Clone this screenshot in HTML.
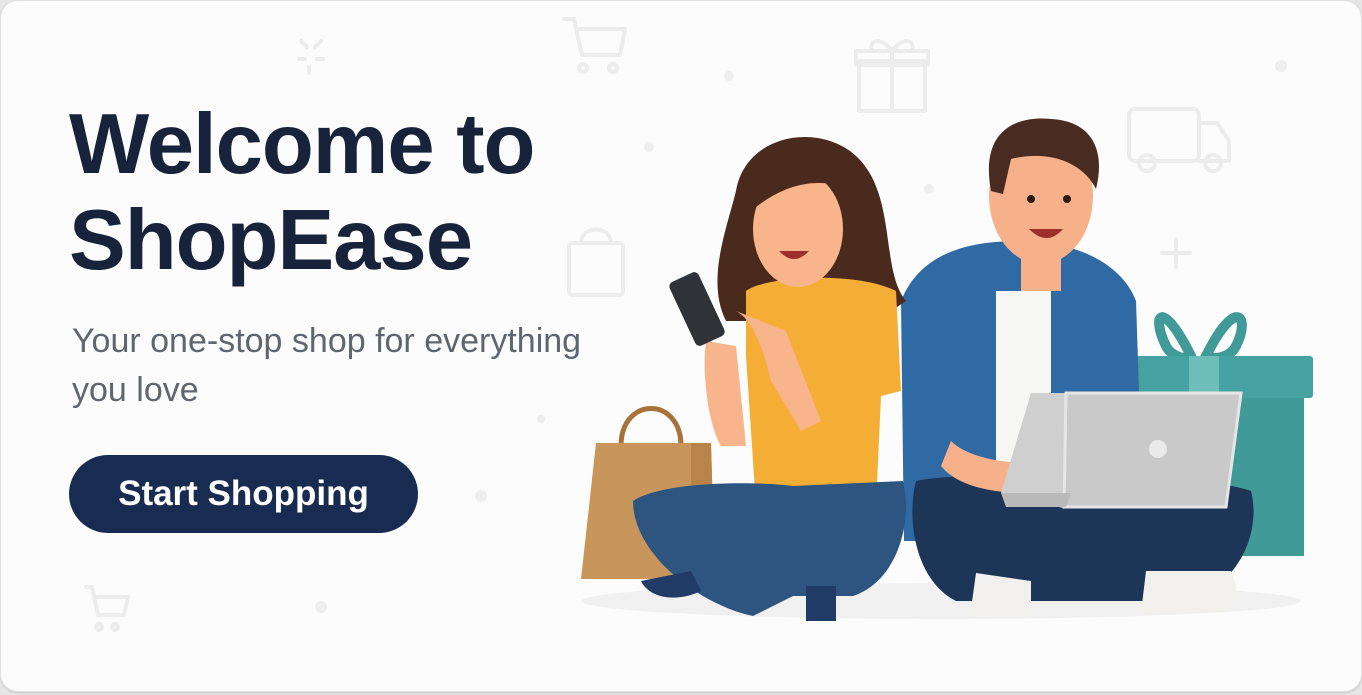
<!DOCTYPE html>
<html><head><meta charset="utf-8"><style>
html,body{margin:0;padding:0;background:#e6e6e6;}
body{width:1362px;height:695px;overflow:hidden;position:relative;font-family:"Liberation Sans",sans-serif;}
.card{position:absolute;left:0;top:0;width:1360px;height:690px;background:#fcfcfc;border:1px solid #e2e2e2;border-radius:18px;overflow:hidden;box-shadow:0 1px 2px rgba(0,0,0,.15);}
h1{position:absolute;left:68px;top:96px;margin:0;font-size:85px;line-height:96px;font-weight:700;color:#17223b;letter-spacing:-1px;}
p{position:absolute;left:71px;top:316px;margin:0;font-size:34px;line-height:49px;color:#5f6670;width:545px;}
.btn{position:absolute;left:68px;top:454px;width:349px;height:78px;border-radius:39px;background:#182c52;color:#fff;font-size:35px;font-weight:700;line-height:78px;text-align:center;}
svg{position:absolute;left:0;top:0;}
</style></head><body><div class="card">
<svg width="1362" height="695" viewBox="0 0 1362 695">
<g fill="none" stroke="#ececec" stroke-width="4" stroke-linecap="round" stroke-linejoin="round">
<path d="M563 18h10l8 36h38l5-26h-48"/><circle cx="582" cy="67" r="4"/><circle cx="612" cy="67" r="4"/>
<rect x="858" y="60" width="66" height="50"/><rect x="855" y="50" width="72" height="14"/><path d="M891 50v60M891 50c-10-14-24-12-20 0M891 50c10-14 24-12 20 0"/>
<rect x="1128" y="108" width="70" height="52" rx="6"/><path d="M1198 122h18l12 18v20h-30"/><circle cx="1146" cy="162" r="8"/><circle cx="1212" cy="162" r="8"/>
<rect x="568" y="242" width="54" height="52" rx="3"/><path d="M580 242c0-18 30-18 30 0"/>
<path d="M85 586h6l6 28h26l4-18h-34"/><circle cx="98" cy="626" r="3"/><circle cx="114" cy="626" r="3"/>
<path d="M300 40l6 6M320 40l-6 6M298 58h6M316 58h6M308 66l0 6"/>
<path d="M1175 238v28M1161 252h28"/>
</g>
<g fill="#eeeeee"><circle cx="728" cy="75" r="5"/><circle cx="648" cy="146" r="5"/><circle cx="928" cy="188" r="5"/><circle cx="1280" cy="65" r="6"/><circle cx="480" cy="495" r="6"/><circle cx="320" cy="606" r="6"/><circle cx="540" cy="418" r="4"/></g>
<ellipse cx="940" cy="600" rx="360" ry="18" fill="#f0f0f0"/>
<!-- gift -->
<path d="M1190 355c-30-60-40-40-25-10 5 10 20 15 25 10zM1205 355c30-60 45-40 30-10-5 10-20 15-30 10z" fill="none" stroke="#3f9a98" stroke-width="10"/>
<rect x="1138" y="395" width="165" height="160" fill="#3f9a98"/>
<rect x="1130" y="355" width="182" height="42" rx="3" fill="#46a2a0"/>
<rect x="1188" y="355" width="30" height="200" fill="#6dbdb8"/>
<!-- bag -->
<path d="M620 445c0-50 60-50 60 0" fill="none" stroke="#a8733a" stroke-width="5"/>
<path d="M595 442h115l4 136h-134z" fill="#c8965a"/>
<path d="M690 442h20l4 136h-24z" fill="#b98449"/>
<!-- man -->
<path d="M900 300c20-50 70-60 120-60s100 20 115 60l8 240h-240z" fill="#2f6aa5"/>
<path d="M995 290h55v175h-55z" fill="#f6f6f4"/>
<path d="M915 480c40-10 280-10 335 10 10 40-10 90-60 110h-235c-40-20-50-80-40-120z" fill="#1d3557"/>
<path d="M950 440c20 20 70 25 100 20v30c-40 5-90 0-110-25z" fill="#f7b18a"/>
<rect x="1020" y="230" width="40" height="60" fill="#f7b18a"/>
<ellipse cx="1040" cy="195" rx="52" ry="68" fill="#f7b18a"/>
<path d="M990 190c-12-65 30-75 60-72 40 2 55 30 45 70-12-25-45-40-85-30l-8 35z" fill="#4a2b22"/>
<circle cx="1030" cy="198" r="4" fill="#2b1a16"/><circle cx="1066" cy="198" r="4" fill="#2b1a16"/>
<path d="M1028 228q18 18 34 0z" fill="#9c2f2a"/>
<path d="M1000 492l30-100h210l-18 115h-160z" fill="#cfcfcf"/>
<path d="M1065 392h175l-15 114h-162z" fill="#c9c9c9" stroke="#e6e6e6" stroke-width="3"/>
<circle cx="1157" cy="448" r="9" fill="#eaeaea"/>
<path d="M1000 492h70l-5 14h-60z" fill="#b9b9b9"/>
<path d="M975 572l55 8v30c-20 10-55 10-60 -2z" fill="#f2f0ec"/>
<path d="M1145 570l85 0c10 20 5 40-20 42h-70z" fill="#f2f0ec"/>
<!-- woman -->
<path d="M735 190c10-60 90-70 125-30 35 40 20 110 45 140l-30 20h-150c-20-40 0-90 10-130z" fill="#4b2a1e"/>
<path d="M745 290c20-15 110-20 150 0l5 100-20 5-5 110h-120l-10-150z" fill="#f4ad35"/>
<ellipse cx="797" cy="228" rx="45" ry="58" fill="#f8b48a"/>
<path d="M750 210c0-40 60-60 90-25-30-8-60 0-90 25z" fill="#4b2a1e"/>
<path d="M778 250q15 16 30 0z" fill="#9c2f2a"/>
<path d="M705 340c-5 40 5 90 15 105h25l-10-100z" fill="#f8b48a"/>
<path d="M735 310c20 10 30 50 35 70l30 50 20-10-35-90z" fill="#f8b48a"/>
<rect x="680" y="273" width="32" height="70" rx="5" transform="rotate(-25 696 308)" fill="#2f3338"/>
<path d="M632 500c30-20 120-20 160-15l110 -5c10 40-5 100-50 115h-60l-40 20c-50-10-120-60-120-115z" fill="#2d5580"/>
<path d="M640 580l50-10 10 20c-20 10-50 10-60 -10z" fill="#1f3b66"/>
<path d="M805 585h30v35h-30z" fill="#1f3b66"/>
</svg>
<h1>Welcome to<br>ShopEase</h1>
<p>Your one-stop shop for everything you love</p>
<div class="btn">Start Shopping</div>
</div></body></html>
